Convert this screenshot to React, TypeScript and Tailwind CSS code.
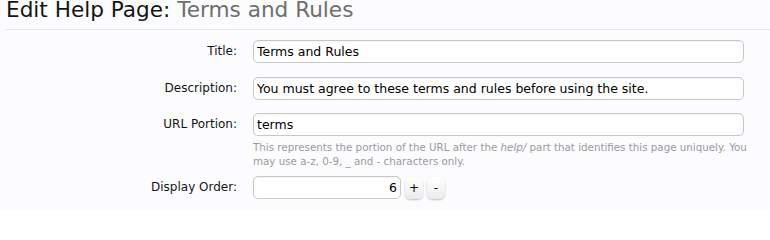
import React from "react";

const inputCls =
  "block h-[23px] w-full rounded-[5px] border border-[#c8c8c8] bg-white px-[3px] text-[12.5px] text-black outline-none shadow-[inset_0_1px_1px_rgba(0,0,0,0.05)]";

const btnCls =
  "flex h-[22px] w-[18px] items-center justify-center rounded-[6px] bg-gradient-to-b from-white to-[#ebebeb] text-[12px] leading-none text-black shadow-[0_1px_2px_rgba(0,0,0,0.25)]";

function Row({ label, children, className = "" }: { label: string; children: React.ReactNode; className?: string }) {
  return (
    <div className={"flex items-start " + className}>
      <div className="w-[237px] shrink-0 text-right text-[12px] leading-[23px] text-[#141414]">{label}</div>
      <div className="ml-[16px] w-[491px]">{children}</div>
    </div>
  );
}

export default function App() {
  return (
    <div
      className="h-[210px] w-[770px] overflow-hidden bg-[#fcfcff]"
      style={{ fontFamily: '"DejaVu Sans", Verdana, sans-serif' }}
    >
      <div className="pl-[5px]">
        <h1 className="mb-[10px] pl-[1px] text-[21.6px] leading-[19px] text-[#141414]">
          Edit Help Page: <span className="text-[#6e6e6e]">Terms and Rules</span>
        </h1>
        <div className="h-px w-full bg-[#dbe9ee]" />
      </div>
      <Row label="Title:" className="mt-[10px]">
        <input className={inputCls} defaultValue="Terms and Rules" />
      </Row>
      <Row label="Description:" className="mt-[14px]">
        <input className={inputCls} defaultValue="You must agree to these terms and rules before using the site." />
      </Row>
      <Row label="URL Portion:" className="mt-[13px]">
        <input className={inputCls} defaultValue="terms" />
        <p className="mt-[4px] whitespace-nowrap text-[10.3px] leading-[14px] text-[#9a9a9a]">
          This represents the portion of the URL after the <i>help/</i> part that identifies this page uniquely. You
          <br />
          may use a-z, 0-9, _ and - characters only.
        </p>
      </Row>
      <Row label="Display Order:" className="mt-[8px]">
        <div className="flex items-center gap-[4px]">
          <input className={inputCls + " !w-[148px] text-right"} defaultValue="6" />
          <button className={btnCls}>+</button>
          <button className={btnCls}>-</button>
        </div>
      </Row>
    </div>
  );
}
